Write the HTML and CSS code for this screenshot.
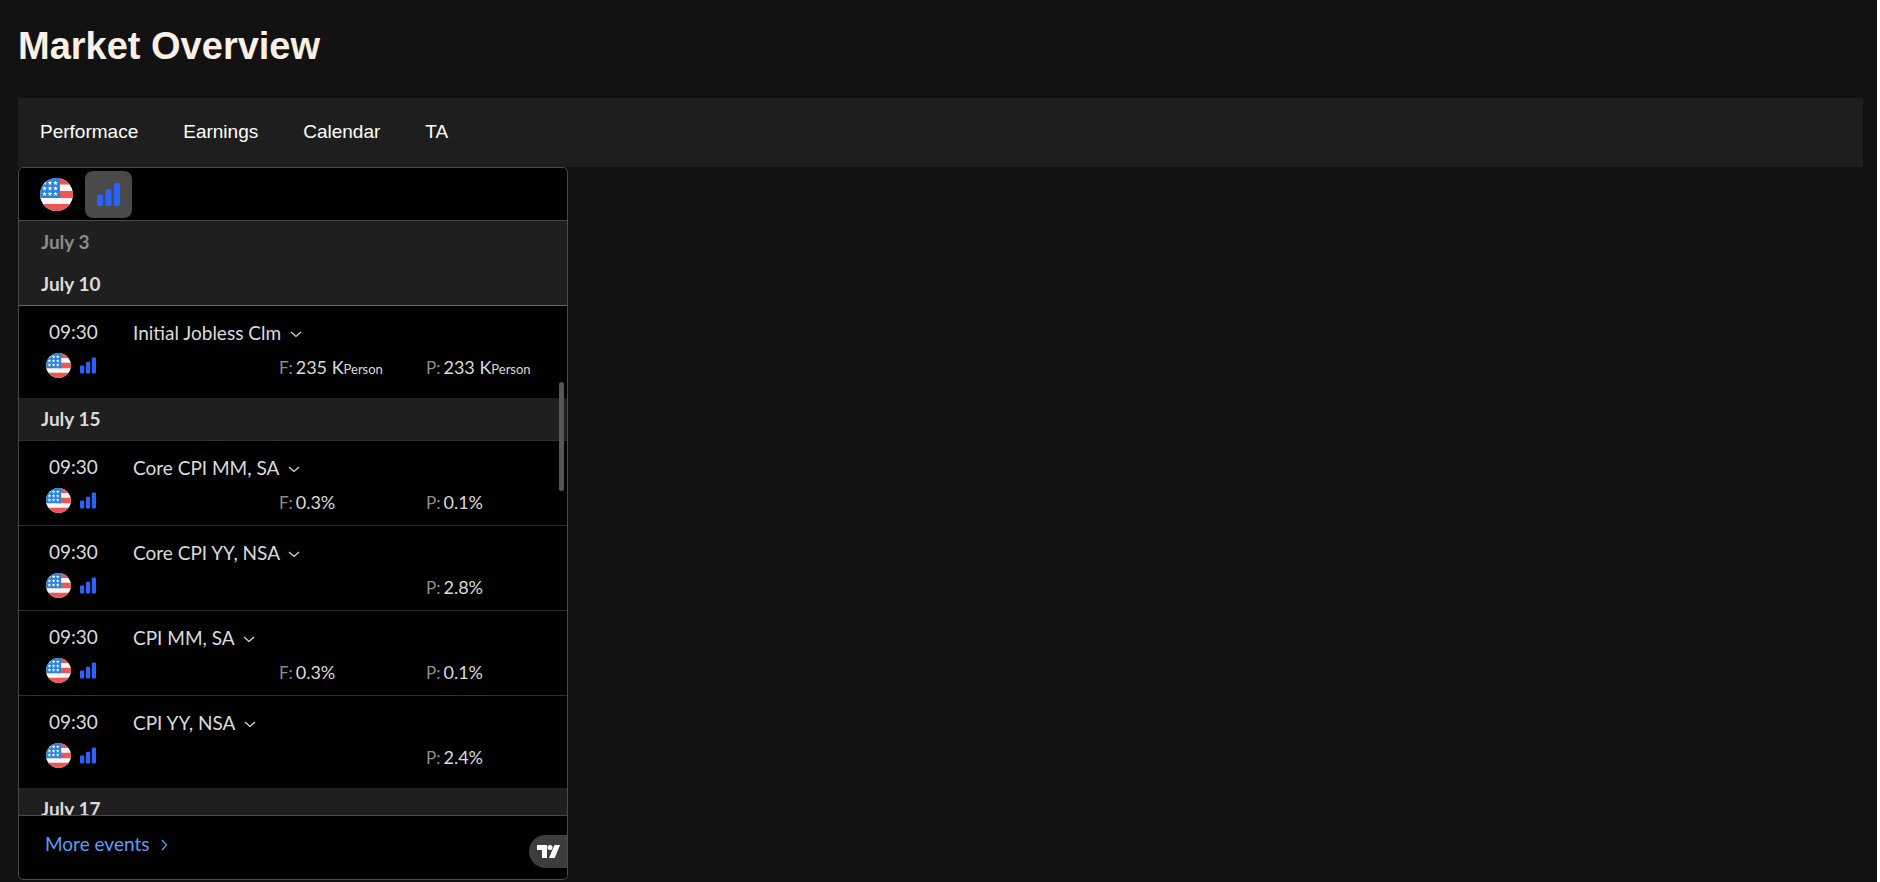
FILE: index.html
```html
<!DOCTYPE html>
<html lang="en">
<head>
  <meta charset="UTF-8" />
  <title>Market Overview</title>
  <link rel="stylesheet" href="styles.css">
</head>
<body>
  <svg class="sprite" aria-hidden="true">
    <symbol id="us" viewBox="0 0 33 33">
      <clipPath id="round"><circle cx="16.5" cy="16.5" r="16.5"/></clipPath>
      <g clip-path="url(#round)">
        <path fill="#f7f7f7" d="M0 0h33v33H0z"/>
        <path fill="#eb5757" d="M16 0h17v6.600H16zM16 13h17v7H16zM0 26h33v7H0z"/>
        <path fill="#2b84dc" d="M0 0h20v20H0z"/>
        <g fill="#fff">
          <path id="star" d="M4.500 2.500l.6 1.500 1.700.1-1.300 1.100.4 1.700-1.400-.9-1.400.9.4-1.700-1.300-1.100 1.700-.1z"/>
          <use href="#star" x="5.500"/><use href="#star" x="11"/>
          <use href="#star" y="5.500"/><use href="#star" x="5.500" y="5.500"/><use href="#star" x="11" y="5.500"/>
          <use href="#star" y="11"/><use href="#star" x="5.500" y="11"/><use href="#star" x="11" y="11"/>
        </g>
      </g>
    </symbol>
    <symbol id="bars" viewBox="0 0 23 23">
      <rect x="0" y="11.500" width="6" height="11.500" rx="1.500"/>
      <rect x="8.500" y="6" width="6" height="17" rx="1.500"/>
      <rect x="17" y="0" width="6" height="23" rx="1.500"/>
    </symbol>
    <symbol id="down" viewBox="0 0 12 7">
      <path d="M1 1l5 4.500L11 1" fill="none" stroke="currentColor" stroke-width="1.300"/>
    </symbol>
  </svg>

  <h1>Market Overview</h1>
  <nav class="navbar">
    <a href="#performance">Performace</a>
    <a href="#earnings">Earnings</a>
    <a href="#calendar">Calendar</a>
    <a href="#ta">TA</a>
  </nav>

  <section class="widget" id="calendar">
    <div class="toolbar">
      <button class="country" aria-label="United States"><svg class="flag-lg"><use href="#us"/></svg></button>
      <button class="importance" aria-label="Importance"><svg class="bars-lg"><use href="#bars"/></svg></button>
    </div>

    <div class="events">
      <h2 class="day past">July 3</h2>
      <h2 class="day">July 10</h2>
      <div class="group now">
        <article class="event">
          <div class="when"><time>09:30</time><svg class="flag"><use href="#us"/></svg><svg class="bars"><use href="#bars"/></svg></div>
          <div class="info">
            <h3>Initial Jobless Clm <svg class="down"><use href="#down"/></svg></h3>
            <div class="values">
              <p class="forecast"><span>F:</span>235 K<small>Person</small></p>
              <p class="prior"><span>P:</span>233 K<small>Person</small></p>
            </div>
          </div>
        </article>
      </div>

      <h2 class="day">July 15</h2>
      <div class="group">
        <article class="event">
          <div class="when"><time>09:30</time><svg class="flag"><use href="#us"/></svg><svg class="bars"><use href="#bars"/></svg></div>
          <div class="info">
            <h3>Core CPI MM, SA <svg class="down"><use href="#down"/></svg></h3>
            <div class="values">
              <p class="forecast"><span>F:</span>0.3%</p>
              <p class="prior"><span>P:</span>0.1%</p>
            </div>
          </div>
        </article>
        <article class="event">
          <div class="when"><time>09:30</time><svg class="flag"><use href="#us"/></svg><svg class="bars"><use href="#bars"/></svg></div>
          <div class="info">
            <h3>Core CPI YY, NSA <svg class="down"><use href="#down"/></svg></h3>
            <div class="values">
              <p class="prior"><span>P:</span>2.8%</p>
            </div>
          </div>
        </article>
        <article class="event">
          <div class="when"><time>09:30</time><svg class="flag"><use href="#us"/></svg><svg class="bars"><use href="#bars"/></svg></div>
          <div class="info">
            <h3>CPI MM, SA <svg class="down"><use href="#down"/></svg></h3>
            <div class="values">
              <p class="forecast"><span>F:</span>0.3%</p>
              <p class="prior"><span>P:</span>0.1%</p>
            </div>
          </div>
        </article>
        <article class="event">
          <div class="when"><time>09:30</time><svg class="flag"><use href="#us"/></svg><svg class="bars"><use href="#bars"/></svg></div>
          <div class="info">
            <h3>CPI YY, NSA <svg class="down"><use href="#down"/></svg></h3>
            <div class="values">
              <p class="prior"><span>P:</span>2.4%</p>
            </div>
          </div>
        </article>
      </div>

      <h2 class="day">July 17</h2>
      <div class="thumb"></div>
    </div>

    <footer class="footer">
      <a class="more" href="#more">More events
        <svg class="next" viewBox="0 0 7 12"><path d="M1 1l4.500 5L1 11" fill="none" stroke="currentColor" stroke-width="1.300"/></svg>
      </a>
      <a class="brand" href="#tradingview" aria-label="TradingView">
        <svg class="logo" viewBox="0 0 23 13"><path fill="#fff" d="M0 0h10v13H5V5H0zM17.500 0H23l-5.300 13H12z"/><circle cx="13" cy="2.500" r="2.500" fill="#fff"/></svg>
      </a>
    </footer>
  </section>
</body>
</html>
```
FILE: styles.css
```css
* { box-sizing: border-box; }
body { margin: 0; min-height: 100vh; padding: 18px 14px 0 18px; border-right: 3px solid #fff; background: #121212; color: #fff; font-family: Arial, "Liberation Sans", sans-serif; }
.sprite { position: absolute; width: 0; height: 0; }
h1 { margin: 6px 0 30px; font-size: 38px; line-height: 44px; color: #faf0e6; }

.navbar { display: flex; gap: 45px; padding: 21px 22px 23px; background: #1e1e1e; }
.navbar a { color: #fff; font-size: 19px; line-height: 25px; text-decoration: none; }

.widget { display: flex; flex-direction: column; max-width: 550px; background: #000; border: 1px solid #4a4a4a; border-radius: 5px; overflow: hidden; color: #dbdbdb; font-family: "Trebuchet MS", Lato, sans-serif; font-size: 19px; }
.toolbar { display: flex; align-items: center; gap: 12px; padding: 3px 21px 2px; border-bottom: 1px solid #4a4a4a; }
button { display: flex; align-items: center; justify-content: center; padding: 0; border: none; background: none; cursor: pointer; }
.importance { width: 47px; height: 47px; border-radius: 8px; background: #4a4a4a; }
.flag-lg { width: 33px; height: 33px; }
.bars-lg { width: 23px; height: 23px; fill: #2962ff; }

.events { position: relative; height: 594px; overflow: hidden; }
.day { margin: 0; padding: 0 22px; background: #1f1f1f; font-size: 19px; line-height: 42px; font-weight: bold; }
.past { color: #8c8c8c; }
.group { padding-bottom: 7px; border-top: 1px solid #2e2e2e; }
.now { border-top-color: #b24747; }
.event { display: flex; height: 85px; border-bottom: 1px solid #2e2e2e; }
.event:last-child { border-bottom: none; }
.when { display: flex; flex-wrap: wrap; align-content: flex-start; gap: 8px 9px; width: 114px; padding: 12px 27px 0; }
.when time { width: 100%; line-height: 27px; padding-left: 3px; }
.flag { width: 25px; height: 25px; }
.bars { width: 16px; height: 25px; fill: #2962ff; }
.info { flex: 1; padding-top: 13px; }
h3 { margin: 0; font-size: 19px; line-height: 27px; font-weight: normal; }
.down { width: 12px; height: 7px; margin-left: 4px; vertical-align: 2px; }
.values { display: grid; grid-template-columns: 146px 147px 1fr; margin-top: 8px; font-size: 18px; line-height: 27px; }
.values p { margin: 0; white-space: nowrap; }
.values span { margin-right: 3px; color: #8c8c8c; font-size: 17px; }
.values small { font-size: 13px; }
.forecast { grid-column: 2; }
.prior { grid-column: 3; }
.thumb { position: absolute; top: 161px; right: 3px; width: 5px; height: 109px; border-radius: 3px; background: #575757; }

.footer { display: flex; justify-content: space-between; align-items: flex-start; height: 64px; border-top: 1px solid #4a4a4a; }
.more { padding: 14px 26px; color: #5b9cf6; line-height: 27px; text-decoration: none; }
.next { width: 7px; height: 12px; margin-left: 7px; }
.brand { display: flex; align-items: center; width: 38px; height: 33px; margin-top: 19px; padding-left: 8px; border-radius: 17px 0 0 17px; background: #3d3d3d; }
.logo { width: 23px; height: 13px; }
```
